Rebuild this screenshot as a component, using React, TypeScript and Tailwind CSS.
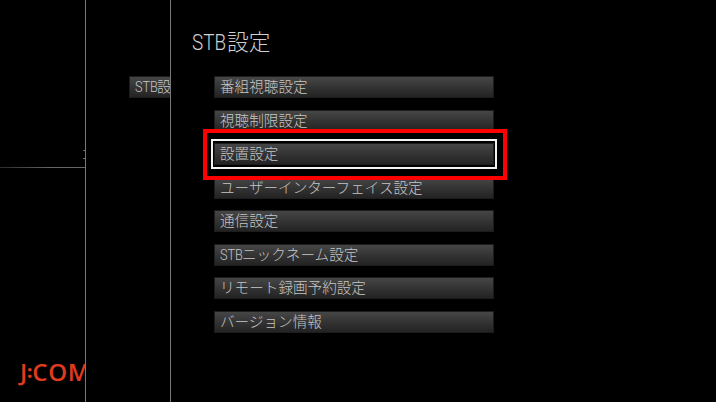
import React from "react";

interface MenuItem {
  prefix?: string;
  label: string;
  selected?: boolean;
}

const menuItems: MenuItem[] = [
  { label: "番組視聴設定" },
  { label: "視聴制限設定" },
  { label: "設置設定", selected: true },
  { label: "ユーザーインターフェイス設定" },
  { label: "通信設定" },
  { prefix: "STB", label: "ニックネーム設定" },
  { label: "リモート録画予約設定" },
  { label: "バージョン情報" },
];

// Latin letters are set half-width next to the kanji
const Narrow: React.FC<{ children: React.ReactNode; className: string }> = ({ children, className }) => (
  <span className={`inline-block shrink-0 ${className}`}>
    <span className="inline-block origin-left scale-x-[0.87]">{children}</span>
  </span>
);

const MenuRow: React.FC<{ item: MenuItem }> = ({ item }) => (
  <li className="relative flex h-[22px] w-[280px] items-center border border-[#1c1c1c] bg-linear-to-b from-[#464646] to-[#232323] pt-px pl-[5px] text-[14.6px] leading-none whitespace-nowrap text-[#c6c6c6]">
    {item.prefix && <Narrow className="w-[22px]">{item.prefix}</Narrow>}
    <span>{item.label}</span>
    {item.selected && (
      <>
        <span className="absolute -inset-x-1 -inset-y-[5px] border-2 border-[#f2f2f2]" />
        <span className="absolute -top-[15px] -right-[14px] -bottom-[16px] -left-[12px] z-10 border-4 border-[#ff0000]" />
      </>
    )}
  </li>
);

const Logo: React.FC = () => (
  <div className="flex h-6 items-center pl-[20px] font-['Open_Sans',sans-serif] text-[24px] leading-6 font-semibold text-[#e23a1e]">
    <span className="w-[8px]">J</span>
    <span className="w-[8px] pb-px text-center text-[17px] font-extrabold">:</span>
    <span className="tracking-[0.8px]">COM</span>
  </div>
);

const App: React.FC = () => (
  <div className="flex h-[402px] w-[716px] overflow-hidden bg-black font-['Roboto','Noto_Sans_CJK_JP',sans-serif] font-light">
    <aside className="flex w-[86px] shrink-0 flex-col overflow-hidden border-r border-[#777]">
      <div className="flex h-[167px] items-end justify-end pb-[6px] text-[#aaa]">
        <span className="-mr-[10px] text-[14px] leading-none">コ</span>
      </div>
      <div className="h-px bg-linear-to-r from-[#2c2c2c] to-[#666] to-60%" />
      <div className="mt-[192px]">
        <Logo />
      </div>
    </aside>

    <section className="w-[85px] shrink-0 overflow-hidden border-r border-[#777] pt-[76px] pl-[43px]">
      <div className="flex h-[22px] w-[280px] items-center border border-[#1c1c1c] bg-linear-to-b from-[#464646] to-[#232323] pt-px pl-[5px] text-[14.6px] leading-none text-[#c6c6c6]">
        <Narrow className="w-[22px]">STB</Narrow>
        <span>設定</span>
      </div>
    </section>

    <main className="flex-1">
      <h1 className="flex h-[76px] items-start pt-[32px] pl-[21px] text-[21.7px] leading-none text-[#d0d0d0]">
        <Narrow className="w-[35px]">STB</Narrow>
        <span>設定</span>
      </h1>
      <ul className="flex flex-col gap-[11.5px] pl-[43px]">
        {menuItems.map((item) => (
          <MenuRow key={item.label} item={item} />
        ))}
      </ul>
    </main>
  </div>
);

export default App;
